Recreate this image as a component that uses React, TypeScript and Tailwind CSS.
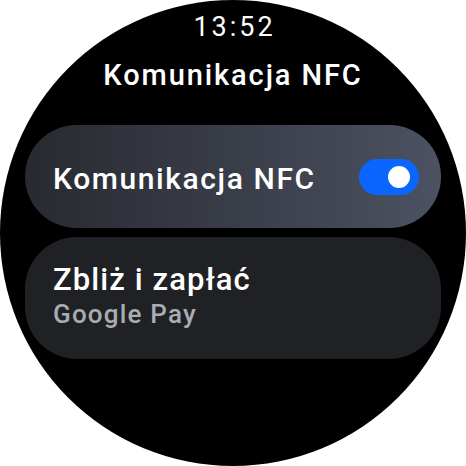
export default function App() {
  return (
    <div className="w-[466px] h-[466px] bg-white" style={{ fontFamily: "Roboto, 'Noto Sans', sans-serif" }}>
      <div className="w-[466px] h-[466px] rounded-full bg-black overflow-hidden flex flex-col items-center text-white">
        {/* Clock */}
        <div className="mt-[10px] text-[27px] leading-[34px] tracking-[3px] pl-[3px]">13:52</div>
        {/* Title */}
        <div className="mt-[15px] text-[29px] leading-[32px] font-medium tracking-[1.9px]">Komunikacja NFC</div>

        {/* NFC toggle card */}
        <div className="mt-[34px] w-[416px] h-[103px] rounded-full bg-gradient-to-r from-[#282a30] to-[#4c5262] flex items-center justify-between pl-[28px] pr-[22px]">
          <span className="text-[30px] font-medium tracking-[1.6px] pt-[3px]">Komunikacja NFC</span>
          <div className="w-[60px] h-[36px] rounded-full bg-[#0a66ff] flex items-center justify-end pr-[9px]">
            <div className="w-[22px] h-[22px] rounded-full bg-white" />
          </div>
        </div>

        {/* Tap & pay card */}
        <div className="mt-[9px] w-[416px] h-[122px] rounded-[52px] bg-[#202124] flex flex-col pt-[25px] pl-[28px]">
          <span className="text-[31px] leading-[36px] font-medium tracking-[1.1px]">Zbliż i zapłać</span>
          <span className="text-[26px] leading-[32px] text-[#a9acb4] font-medium tracking-[1.2px]">Google Pay</span>
        </div>
      </div>
    </div>
  );
}
